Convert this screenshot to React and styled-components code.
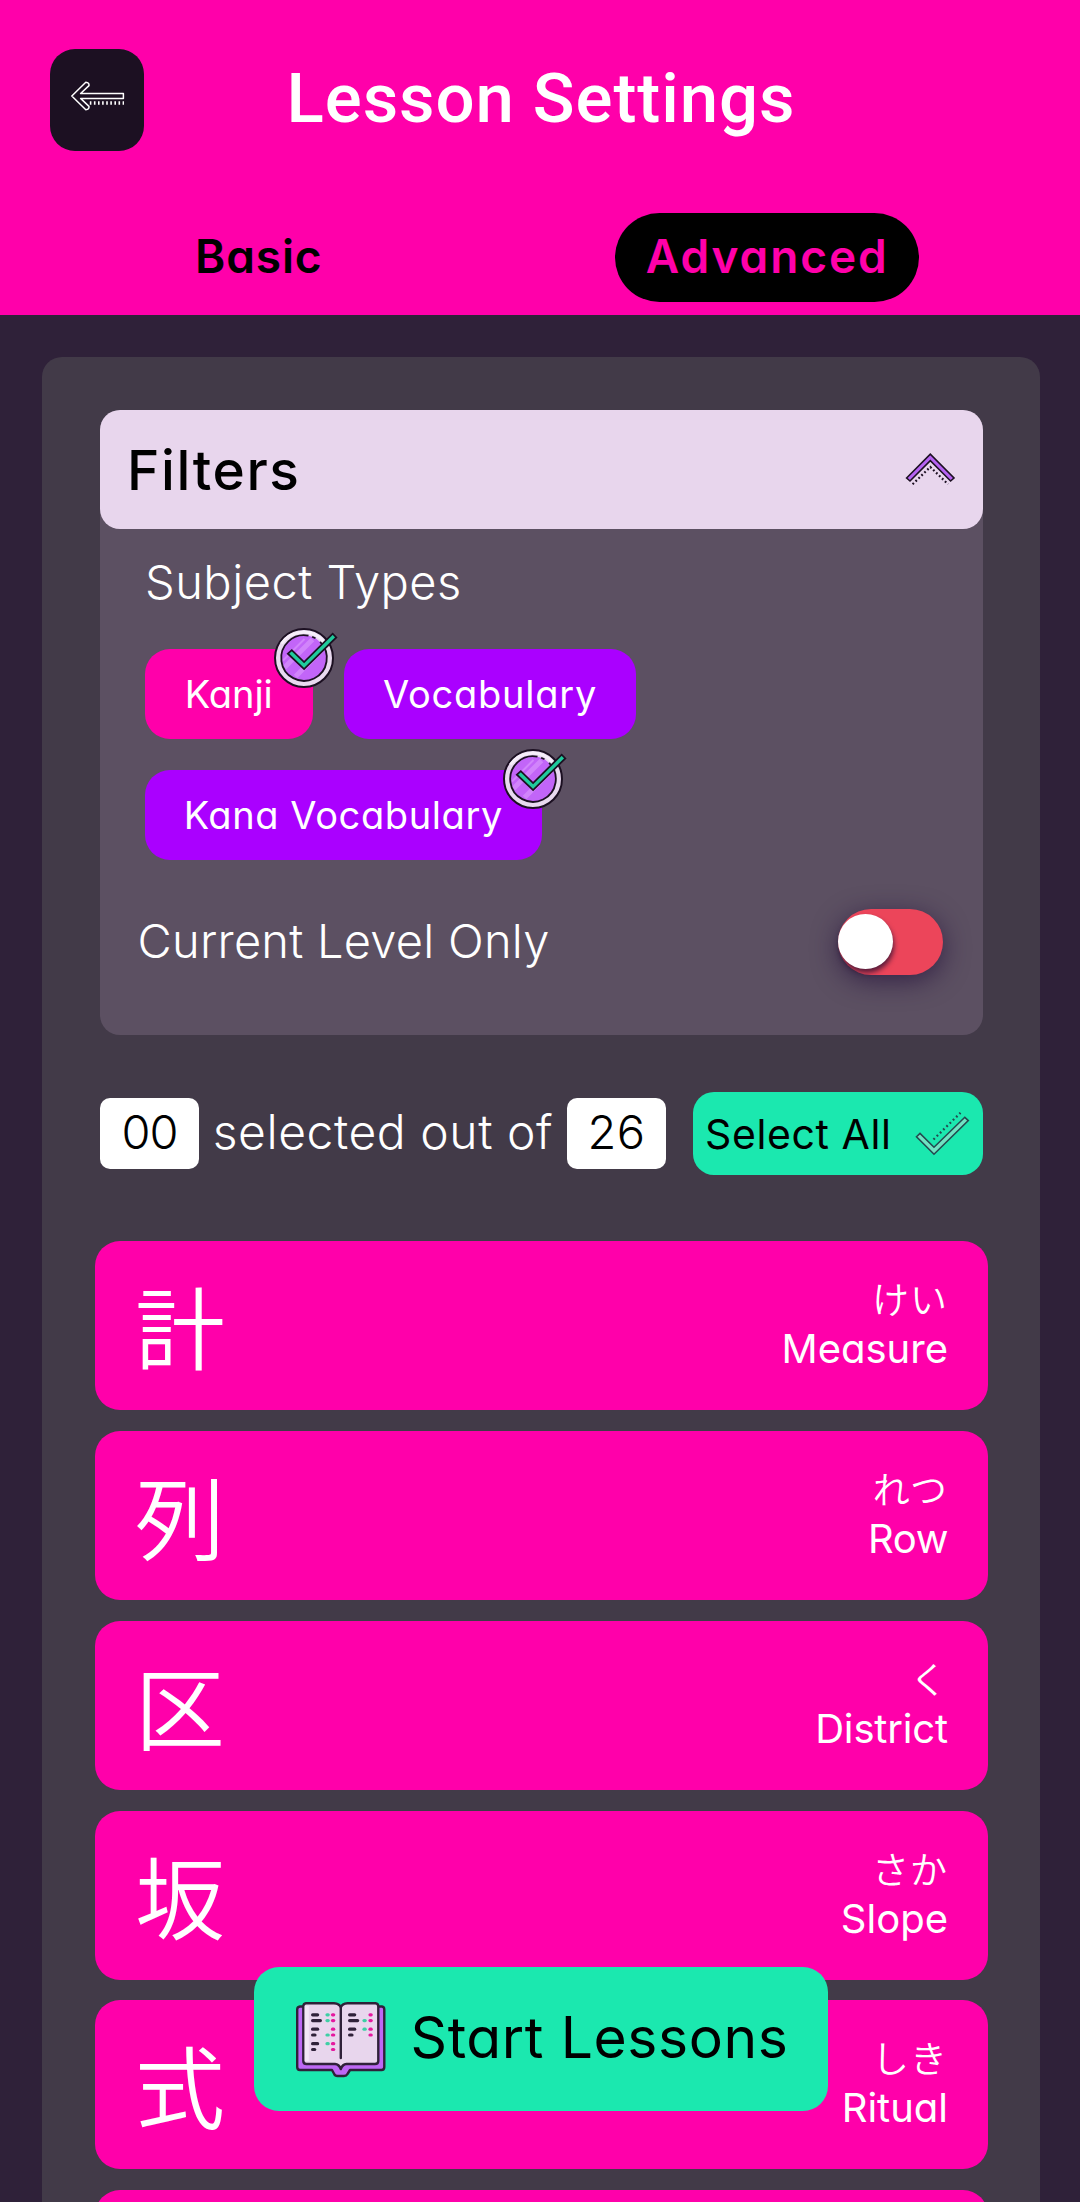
import React from 'react';
import styled, { createGlobalStyle, css } from 'styled-components';

const pink = '#ff00aa';
const purple = '#aa00ff';
const mint = '#1be8af';
const ink = '#1c1022';
const jp = '"Noto Sans CJK JP", sans-serif';

const GlobalStyle = createGlobalStyle`
  * { box-sizing: border-box; }
  body {
    margin: 0;
    background: #2f2139;
    font-family: Inter, "Noto Sans CJK JP", sans-serif;
    font-feature-settings: "cv11";
  }
  svg { display: block; flex: none; }
`;

const Screen = styled.div`
  position: relative;
  width: 1080px;
  height: 2202px;
  overflow: hidden;
  background: #2f2139;
`;

const Header = styled.header`
  height: 315px;
  padding: 49px 50px 0;
  background: ${pink};
`;

const TitleRow = styled.div`
  display: grid;
  grid-template-columns: 94px 1fr 94px;
  align-items: center;
  height: 102px;
`;

const BackButton = styled.button`
  display: flex;
  align-items: center;
  justify-content: center;
  width: 94px;
  height: 102px;
  padding: 0;
  border: 0;
  border-radius: 25px;
  background: ${ink};
`;

const Title = styled.h1`
  margin: 0;
  padding: 0 0 3px 2px;
  text-align: center;
  white-space: nowrap;
  color: #fff;
  font: 500 69px/80px Roboto, sans-serif;
  letter-spacing: 0.9px;
`;

const Tabs = styled.nav`
  display: grid;
  grid-template-columns: 508.5px 508.5px;
  justify-items: center;
  margin: 62px 0 0 -46px;
`;

const Tab = styled.button`
  display: flex;
  align-items: center;
  justify-content: center;
  width: 304px;
  height: 89px;
  padding: 0 0 3px 1px;
  border: 0;
  border-radius: 45px;
  font: 600 46px/60px Inter, sans-serif;
  font-feature-settings: "cv11";
  letter-spacing: ${(p) => p.$spacing}px;
  color: ${(p) => (p.$active ? pink : '#000')};
  background: ${(p) => (p.$active ? '#000' : 'transparent')};
`;

const Main = styled.main`
  padding: 42px 40px 0 42px;
`;

const Panel = styled.section`
  height: 1900px;
  padding: 53px 57px 0 58px;
  border-radius: 20px;
  background: #423a48;
`;

const Filters = styled.div`
  height: 625px;
  border-radius: 20px;
  background: #5c5062;
`;

const FiltersHeader = styled.div`
  display: flex;
  align-items: center;
  justify-content: space-between;
  height: 119px;
  padding: 0 3px 0 27px;
  border-radius: 20px;
  background: #e8d6ed;
  color: #000;
  font-size: 55px;
  font-weight: 500;
  letter-spacing: 1.6px;
`;

const FiltersBody = styled.div`
  padding: 23px 40px 0 45px;
  color: #fff;
`;

const FilterLabel = styled.div`
  font-size: 47px;
  font-weight: 300;
  line-height: 60px;
  letter-spacing: ${(p) => p.$spacing}px;
`;

const Chips = styled.div`
  display: flex;
  flex-wrap: wrap;
  gap: 31px 31.5px;
  width: 600px;
  margin-top: 37px;
`;

const Chip = styled.button`
  position: relative;
  display: flex;
  align-items: center;
  justify-content: center;
  width: ${(p) => p.$width}px;
  height: 90px;
  padding: 0;
  border: 0;
  border-radius: 25px;
  background: ${(p) => (p.$kanji ? pink : purple)};
  color: #fff;
  font: 400 38px/50px Inter, sans-serif;
  font-feature-settings: "cv11";
  letter-spacing: ${(p) => p.$spacing}px;
  white-space: nowrap;
`;

const BadgeSlot = styled.span`
  position: absolute;
  top: -26.5px;
  right: -26.5px;
`;

const LevelRow = styled.div`
  display: flex;
  align-items: center;
  justify-content: space-between;
  height: 66px;
  margin: 49px 0 0 -7.5px;
`;

const LevelLabel = styled(FilterLabel)`
  padding-bottom: 2px;
`;

const Switch = styled.div`
  display: flex;
  align-items: center;
  width: 105px;
  height: 66px;
  padding-bottom: 1px;
  border-radius: 33px;
  background: #ec455a;
  box-shadow: 0 6px 26px rgba(40, 20, 62, 0.75);
`;

const Knob = styled.span`
  width: 55px;
  height: 55px;
  border-radius: 50%;
  background: #fff;
  box-shadow: 1px 4px 5px rgba(40, 16, 50, 0.75);
`;

const CountRow = styled.div`
  display: flex;
  align-items: center;
  height: 83px;
  margin-top: 57px;
`;

const countText = css`
  font-weight: 300;
  line-height: 60px;
`;

const CountBox = styled.span`
  ${countText}
  width: 99px;
  height: 71px;
  padding-top: 4px;
  border-radius: 10px;
  background: #fff;
  color: #000;
  font-size: 47px;
  text-align: center;
  letter-spacing: ${(p) => p.$spacing || 0}px;
`;

const CountLabel = styled.span`
  ${countText}
  width: 368px;
  padding-bottom: 4px;
  color: #fff;
  font-size: 48px;
  text-align: center;
  letter-spacing: 0.55px;
`;

const SelectAll = styled.button`
  display: flex;
  align-items: center;
  justify-content: space-between;
  width: 290px;
  height: 83px;
  margin-left: auto;
  padding: 0 11px 0 12px;
  border: 0;
  border-radius: 21px;
  background: ${mint};
  color: #000;
  font: 400 41px/50px Inter, sans-serif;
  font-feature-settings: "cv11";
  letter-spacing: 0.6px;
`;

const List = styled.ul`
  display: flex;
  flex-direction: column;
  gap: 20.75px;
  margin: 66.4px -5px 0;
  padding: 0;
  list-style: none;
`;

const Card = styled.li`
  display: flex;
  align-items: center;
  justify-content: space-between;
  flex: none;
  height: 169px;
  padding: 0 40px;
  border-radius: 25px;
  background: ${pink};
  color: #fff;
`;

const Kanji = styled.span`
  padding-bottom: 3px;
  font: 350 90px/120px ${jp};
`;

const Answer = styled.div`
  display: flex;
  flex-direction: column;
  align-items: flex-end;
  padding-bottom: 3px;
`;

const Reading = styled.span`
  margin-top: -2px;
  font: 350 37px/52px ${jp};
  letter-spacing: 1px;
`;

const Meaning = styled.span`
  font-size: 40px;
  line-height: 50px;
  letter-spacing: ${(p) => p.$spacing || 0}px;
`;

const StartButton = styled.button`
  position: absolute;
  left: 254px;
  bottom: 91px;
  display: flex;
  align-items: center;
  gap: 24.5px;
  width: 574px;
  height: 144px;
  padding: 0 0 0 42px;
  border: 0;
  border-radius: 25px;
  background: ${mint};
  color: #000;
  font: 400 57px/70px Inter, sans-serif;
  font-feature-settings: "cv11";
  letter-spacing: 0.6px;
  white-space: nowrap;
`;

const StartLabel = styled.span`
  padding-bottom: 2px;
`;

const ArrowIcon = () => (
  <svg width="80" height="80" viewBox="-3 0 80 80" fill="none" stroke="#fff">
    <path d="M11.8 36 L25.8 22.2 Q29.4 22.6 29 25.6 L20.6 33.5 H63.4 V38.4 H20.6 L29 46.4 Q29.4 49.4 25.8 49.8 Z" strokeWidth="1.5" strokeLinejoin="round" />
    <path d="M29.8 43 H64" strokeWidth="3.4" strokeDasharray="1.6 2.5" />
  </svg>
);

const ChevronIcon = () => (
  <svg width="90" height="80" viewBox="0 0 90 80" fill="none" stroke={ink}>
    <path d="M16.6 48 L40.3 24.2 L64 48 L60.6 51 L40.3 30.6 L20 51 Z" fill="#b663f2" strokeWidth="1.6" />
    <path d="M22.6 54.2 L40.3 37 L58 54.2" strokeWidth="2.2" strokeDasharray="1.8 2.3" />
  </svg>
);

const CheckIcon = () => (
  <svg width="60" height="60" viewBox="12 14 60 60" fill="none" stroke="#244a50">
    <path d="M16.5 46.8 L20 43.4 L34 57.2 L64.8 27.3 L68.3 30.6 L34 64.2 Z" fill="#6fe3c2" strokeWidth="1.6" />
    <path d="M33.5 49.5 L60.5 22.8" strokeWidth="2.3" strokeDasharray="1.8 2.75" />
  </svg>
);

const Badge = () => (
  <svg width="70" height="70" viewBox="19.5 12.5 70 70" fill="none">
    <circle cx="54.5" cy="47.5" r="29" fill="#e9daf0" stroke={ink} strokeWidth="2" />
    <path d="M32 33 A26.7 26.7 0 0 1 75 32" stroke="#f7effa" strokeWidth="3" />
    <circle cx="54.5" cy="47.5" r="22.8" fill="#c265f8" />
    <path d="M35 57 L63 29 M46 66 L74 38" stroke="#d184fb" strokeWidth="5" />
    <path d="M33.5 50 L55 28.5" stroke="#d184fb" strokeWidth="2" />
    <path d="M59 25.2 A22.8 22.8 0 1 0 70.6 31.4" stroke={ink} strokeWidth="1.8" />
    <path d="M62.6 26.2 L66 27.8" stroke={ink} strokeWidth="1.8" />
    <path d="M38.4 43.2 L42.3 39.7 L54.6 51.6 L83.2 23.2 L86.8 26.9 L54.6 58.6 Z" fill="#1fcb9c" stroke={ink} strokeWidth="1.8" />
  </svg>
);

const bookRows = [
  { y: 13.8, left: 22.6, leftGreen: true, right: 59.7 },
  { y: 19.6, left: 25.4, leftGreen: true, right: 62.6, rightGreen: true },
  { y: 28.2, left: 22.6, right: 59.7, rightGreen: true },
  { y: 34, left: 20, leftGreen: true, right: 57 },
  { y: 42.7, left: 22.6, leftGreen: true },
  { y: 48.5, left: 19.7 },
];

const BookIcon = () => (
  <svg width="90" height="77" viewBox="0 0 90 77" fill="none" strokeLinecap="round" strokeLinejoin="round">
    <path
      d="M4 5.5 H86 Q88.3 5.8 88.3 8.5 V66 Q88.3 69 85.5 69 H54 L51.5 73 Q50.5 75 48 75 H41.5 Q39 75 38.2 73 L36 69 H4 Q1.2 69 1.2 66 V8.5 Q1.2 5.8 4 5.5 Z"
      fill="#bd68f4" stroke="#2f2139" strokeWidth="2.4"
    />
    <path
      d="M10 2.2 H38 Q43.5 2.5 44.8 6.5 Q46 2.5 51.5 2.2 H79.5 Q82.3 2.5 82.3 5.5 V60 Q82.3 63 79 63 H50.5 Q46.5 63.2 44.8 68 Q43 63.2 39 63 H10.5 Q7.3 63 7.3 60 V5.5 Q7.3 2.5 10 2.2 Z"
      fill="#e8d6ed" stroke="#2f2139" strokeWidth="2.4"
    />
    <path d="M10.8 5 V60" stroke="#f2e6f6" strokeWidth="4" strokeLinecap="butt" />
    <path d="M44.8 7 V57" stroke="#2f2139" strokeWidth="2.4" />
    {bookRows.map((r) => (
      <g key={r.y} strokeWidth="3.2">
        <path d={`M16.6 ${r.y} H${r.left - 1}`} stroke="#2f2139" />
        {r.leftGreen && <path d={`M31 ${r.y} h1.2`} stroke="#3ecfa5" />}
        <path d={`M36.5 ${r.y} h1.2`} stroke="#e5189f" />
        {r.right && <path d={`M53.6 ${r.y} H${r.right - 1}`} stroke="#2f2139" />}
        {r.rightGreen && <path d={`M68 ${r.y} h1.2`} stroke="#3ecfa5" />}
        {r.right && <path d={`M74 ${r.y} h1.2`} stroke="#e5189f" />}
      </g>
    ))}
  </svg>
);

const subjectTypes = [
  { label: 'Kanji', width: 167.5, spacing: 0, kanji: true, checked: true },
  { label: 'Vocabulary', width: 292, spacing: 0.75 },
  { label: 'Kana Vocabulary', width: 396.5, spacing: 0.6, checked: true },
];

const lessons = [
  { kanji: '計', reading: 'けい', meaning: 'Measure' },
  { kanji: '列', reading: 'れつ', meaning: 'Row', spacing: -0.4 },
  { kanji: '区', reading: 'く', meaning: 'District', spacing: -0.15 },
  { kanji: '坂', reading: 'さか', meaning: 'Slope' },
  { kanji: '式', reading: 'しき', meaning: 'Ritual' },
];

export default function App() {
  return (
    <Screen>
      <GlobalStyle />
      <Header>
        <TitleRow>
          <BackButton aria-label="Back"><ArrowIcon /></BackButton>
          <Title>Lesson Settings</Title>
        </TitleRow>
        <Tabs>
          <Tab $spacing={0.9}>Basic</Tab>
          <Tab $active $spacing={1.9}>Advanced</Tab>
        </Tabs>
      </Header>
      <Main>
        <Panel>
          <Filters>
            <FiltersHeader>
              Filters
              <ChevronIcon />
            </FiltersHeader>
            <FiltersBody>
              <FilterLabel $spacing={0.5}>Subject Types</FilterLabel>
              <Chips>
                {subjectTypes.map((t) => (
                  <Chip key={t.label} $width={t.width} $spacing={t.spacing} $kanji={t.kanji}>
                    {t.label}
                    {t.checked && <BadgeSlot><Badge /></BadgeSlot>}
                  </Chip>
                ))}
              </Chips>
              <LevelRow>
                <LevelLabel $spacing={0.25}>Current Level Only</LevelLabel>
                <Switch role="switch" aria-checked="false"><Knob /></Switch>
              </LevelRow>
            </FiltersBody>
          </Filters>
          <CountRow>
            <CountBox $spacing={-1}>00</CountBox>
            <CountLabel>selected out of</CountLabel>
            <CountBox $spacing={0.5}>26</CountBox>
            <SelectAll>
              Select All
              <CheckIcon />
            </SelectAll>
          </CountRow>
          <List>
            {lessons.map((l) => (
              <Card key={l.kanji}>
                <Kanji lang="ja">{l.kanji}</Kanji>
                <Answer>
                  <Reading lang="ja">{l.reading}</Reading>
                  <Meaning $spacing={l.spacing}>{l.meaning}</Meaning>
                </Answer>
              </Card>
            ))}
            <Card />
          </List>
        </Panel>
      </Main>
      <StartButton>
        <BookIcon />
        <StartLabel>Start Lessons</StartLabel>
      </StartButton>
    </Screen>
  );
}
